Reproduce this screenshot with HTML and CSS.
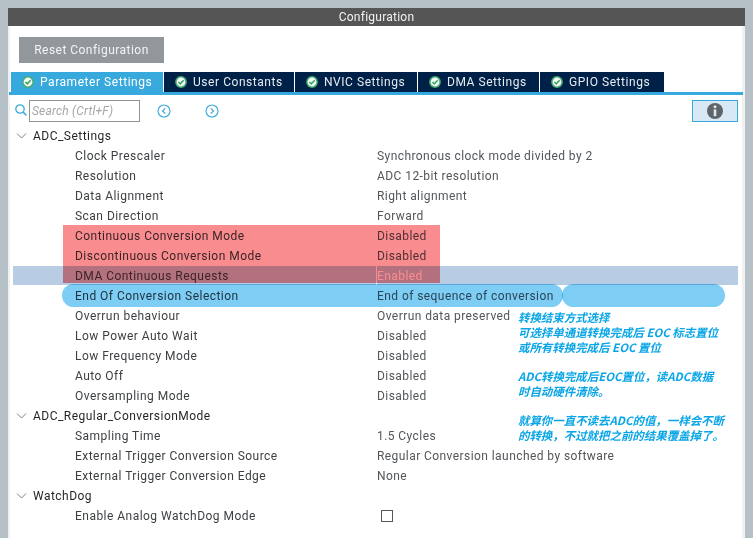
FILE: index.html
```html
<!DOCTYPE html>
<html lang="en">
<head>
<meta charset="utf-8">
<title>Configuration</title>
<link rel="stylesheet" href="styles.css">
</head>
<body>
<svg class="defs" width="0" height="0" aria-hidden="true">
  <symbol id="check" viewBox="0 0 12 12">
    <circle cx="6" cy="6" r="5.9" fill="#46ab72"/>
    <circle cx="6" cy="6" r="4.4" fill="#f4fbf6"/>
    <path d="M3.4 6 5.3 7.9 8.7 4.3" fill="none" stroke="#3aa564" stroke-width="1.6"/>
  </symbol>
  <symbol id="chev" viewBox="0 0 10 6">
    <path d="M.5.5 5 5 9.5.5" fill="none" stroke="#7a7f83" stroke-width="1"/>
  </symbol>
</svg>
<main class="window">
  <header class="title">Configuration</header>
  <div class="panel">
    <div class="toolbar"><button class="reset">Reset Configuration</button></div>
    <nav class="tabs">
      <div class="tab active"><svg class="tick"><use href="#check"/></svg>Parameter Settings</div>
      <div class="tab t2"><svg class="tick"><use href="#check"/></svg>User Constants</div>
      <div class="tab t3"><svg class="tick"><use href="#check"/></svg>NVIC Settings</div>
      <div class="tab t4"><svg class="tick"><use href="#check"/></svg>DMA Settings</div>
      <div class="tab t5"><svg class="tick"><use href="#check"/></svg>GPIO Settings</div>
    </nav>
    <div class="searchbar">
      <svg class="mag" viewBox="0 0 12 12"><circle cx="5" cy="5" r="4.2" fill="none" stroke="#38a9dc" stroke-width="1.3"/><path d="M8 8l3.4 3.4" stroke="#38a9dc" stroke-width="1.5"/></svg>
      <div class="search">Search (Crtl+F)</div>
      <svg class="nav first" viewBox="0 0 14 14"><circle cx="7" cy="7" r="6" fill="none" stroke="#38a9dc" stroke-width="1.1"/><path d="M8.2 4.3 5.5 7l2.7 2.7" fill="none" stroke="#38a9dc" stroke-width="1.2"/></svg>
      <svg class="nav second" viewBox="0 0 14 14"><circle cx="7" cy="7" r="6" fill="none" stroke="#38a9dc" stroke-width="1.1"/><path d="M5.8 4.3 8.5 7l-2.7 2.7" fill="none" stroke="#38a9dc" stroke-width="1.2"/></svg>
      <div class="info"><svg viewBox="0 0 16 16" width="16" height="16"><circle cx="8" cy="8" r="8" fill="#5f6468"/><circle cx="8" cy="3.8" r="1.5" fill="#dbe9f5"/><rect x="6.7" y="6.4" width="2.6" height="6.8" fill="#dbe9f5"/></svg></div>
    </div>
    <div class="tree">
      <div class="group"><svg class="chev"><use href="#chev"/></svg>ADC_Settings</div>
      <div class="row"><span class="key">Clock Prescaler</span><span class="val">Synchronous clock mode divided by 2</span></div>
      <div class="row"><span class="key">Resolution</span><span class="val">ADC 12-bit resolution</span></div>
      <div class="row"><span class="key">Data Alignment</span><span class="val">Right alignment</span></div>
      <div class="row"><span class="key">Scan Direction</span><span class="val">Forward</span></div>
      <div class="row"><span class="key">Continuous Conversion Mode</span><span class="val">Disabled</span></div>
      <div class="row"><span class="key">Discontinuous Conversion Mode</span><span class="val">Disabled</span></div>
      <div class="row selected"><span class="key">DMA Continuous Requests</span><span class="val">Enabled</span></div>
      <div class="row"><span class="key">End Of Conversion Selection</span><span class="val">End of sequence of conversion</span></div>
      <div class="row"><span class="key">Overrun behaviour</span><span class="val">Overrun data preserved</span></div>
      <div class="row"><span class="key">Low Power Auto Wait</span><span class="val">Disabled</span></div>
      <div class="row"><span class="key">Low Frequency Mode</span><span class="val">Disabled</span></div>
      <div class="row"><span class="key">Auto Off</span><span class="val">Disabled</span></div>
      <div class="row"><span class="key">Oversampling Mode</span><span class="val">Disabled</span></div>
      <div class="group"><svg class="chev"><use href="#chev"/></svg>ADC_Regular_ConversionMode</div>
      <div class="row"><span class="key">Sampling Time</span><span class="val">1.5 Cycles</span></div>
      <div class="row"><span class="key">External Trigger Conversion Source</span><span class="val">Regular Conversion launched by software</span></div>
      <div class="row"><span class="key">External Trigger Conversion Edge</span><span class="val">None</span></div>
      <div class="group"><svg class="chev"><use href="#chev"/></svg>WatchDog</div>
      <div class="row"><span class="key">Enable Analog WatchDog Mode</span><span class="val"><span class="checkbox"></span></span></div>
    </div>
  </div>
</main>
<div class="mark red"></div>
<div class="mark pill-a"></div>
<div class="mark pill-b"></div>
<div class="note n1">转换结束方式选择<br>可选择单通道转换完成后 EOC 标志置位<br>或所有转换完成后 EOC 置位</div>
<div class="note n2">ADC转换完成后EOC置位，读ADC数据<br>时自动硬件清除。</div>
<div class="note n3">就算你一直不读去ADC的值，一样会不断<br>的转换，不过就把之前的结果覆盖掉了。</div>
</body>
</html>
```
FILE: styles.css
```css
* { box-sizing: border-box; }
html, body { margin: 0; height: 100%; }
body {
  position: relative;
  width: 753px;
  height: 538px;
  overflow: hidden;
  background: #b6c1c7;
  padding: 8px 8px 0;
  font-family: Roboto, "Liberation Sans", sans-serif;
  font-size: 12px;
  letter-spacing: 0.47px;
  color: #3c3f42;
}
.defs { position: absolute; }
.window { height: 530px; background: #fff; display: flex; flex-direction: column; }
.title {
  height: 18px; line-height: 19px; background: #545554; color: #f2f2f2;
  text-align: center; flex: none; letter-spacing: 0.25px;
}
.panel {
  flex: 1; border-left: 2px solid #f0f0f0; border-right: 3px solid #f0f0f0; padding-top: 11px;
  display: flex; flex-direction: column;
}
.toolbar { padding-left: 9px; height: 35px; flex: none; }
.reset {
  width: 145px; height: 26px; border: 0; background: #92979c; color: #f4f4f4; padding: 0;
  font: inherit; letter-spacing: inherit;
}
.tabs {
  display: flex; gap: 1px; height: 23px; flex: none; padding-left: 2px;
  margin: 0 -1px; border-bottom: 3px solid #38a9dc;
}
.tab {
  height: 20px; line-height: 20px; background: #002147; color: #e6ebf0;
  display: flex; align-items: center; padding-left: 11px; width: 130px; letter-spacing: 0.55px;
}
.tab.active { width: 152px; background: #38a9dc; color: #fff; }
.t3 { width: 122px; }
.t4 { width: 121px; }
.t5 { width: 124px; }
.tick { width: 12px; height: 12px; margin-right: 6px; flex: none; }
.searchbar { position: relative; height: 31px; flex: none; }
.mag { position: absolute; left: 5px; top: 9px; width: 12px; height: 12px; }
.search {
  position: absolute; left: 19px; top: 5px; width: 111px; height: 22px;
  border: 1px solid #8f9499; color: #a5a8ab; font-style: italic;
  line-height: 20px; padding-left: 2px; letter-spacing: 0.2px;
}
.nav { position: absolute; top: 9px; width: 14px; height: 14px; }
.first { left: 147px; }
.second { left: 195px; }
.info {
  position: absolute; left: 682px; top: 5px; width: 46px; height: 22px;
  background: #d9e8f5; border: 1px solid #38a9dc;
  display: flex; align-items: center; justify-content: center;
}
.tree { padding-left: 3px; }
.group, .row { height: 20px; line-height: 20px; display: flex; align-items: center; }
.group { color: #1f2226; padding-left: 20px; position: relative; }
.chev { position: absolute; left: 3px; top: 7px; width: 11px; height: 6px; }
.key { width: 301px; margin-left: 62px; flex: none; }
.val { flex: 1; color: #52565a; height: 100%; border-left: 1px solid transparent; letter-spacing: 0.43px; }
.row.selected { background: #b8cde4; margin: 0 4px 1px 0; height: 19px; align-items: flex-start; }
.row.selected .val { color: #fff; border-left-color: #fff; }
.checkbox { display: block; width: 12px; height: 12px; border: 1px solid #55595c; background: #fff; margin: 4px 0 0 4px; }
.mark { position: absolute; mix-blend-mode: multiply; }
.red { left: 63px; top: 225px; width: 377px; height: 58px; background: #f98c8f; }
.pill-a { left: 62px; top: 284px; width: 501px; height: 23px; border-radius: 12px; background: #7ecdf4; }
.pill-b { left: 562px; top: 284px; width: 163px; height: 23px; border-radius: 12px; background: #7ecdf4; }
.note {
  position: absolute; left: 518px; font-family: "Noto Sans CJK SC", Roboto, sans-serif;
  font-size: 11.45px; line-height: 15px; font-style: italic; font-weight: 700;
  color: #0aa5e6; letter-spacing: 0; white-space: nowrap;
}
.n1 { top: 310px; }
.n2 { top: 369px; }
.n3 { top: 413px; }
```
